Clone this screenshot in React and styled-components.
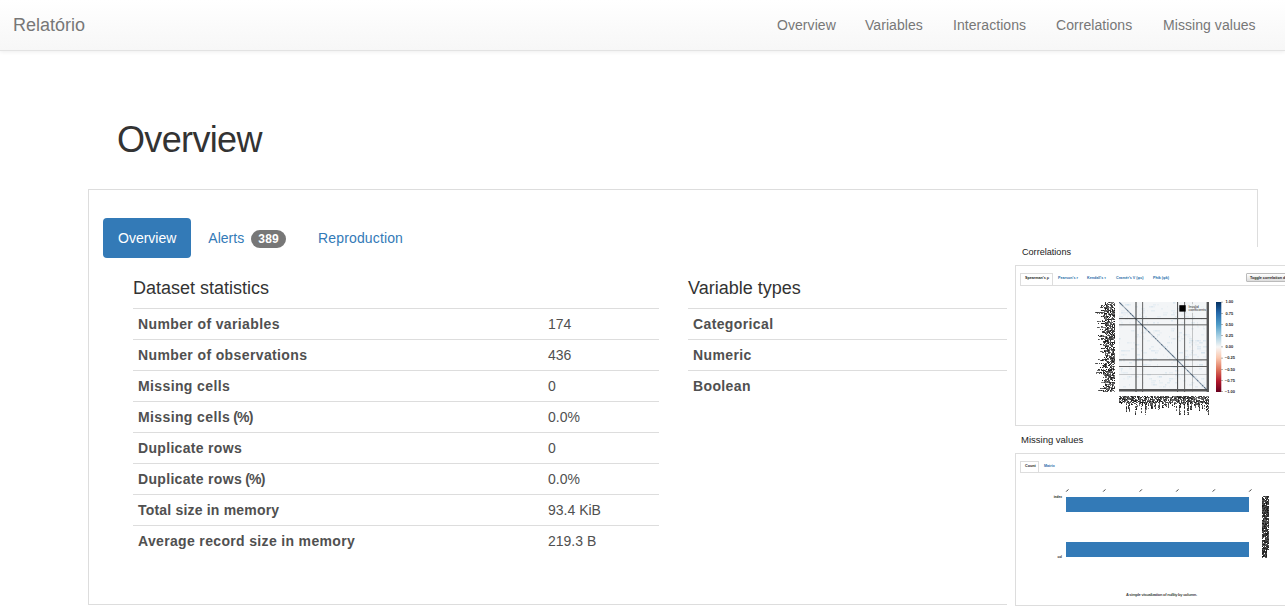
import React from 'react';
import styled, { createGlobalStyle } from 'styled-components';

const GlobalStyle = createGlobalStyle`
  * { box-sizing: border-box; }
  html, body { margin: 0; padding: 0; }
  body {
    background: #fff;
    color: #333;
    font: 14px/20px "Liberation Sans", Arial, sans-serif;
    overflow: hidden;
  }
`;

const Page = styled.div`
  position: relative;
  height: 611px;
  overflow: hidden;
`;

const Navbar = styled.nav`
  display: flex;
  justify-content: space-between;
  align-items: center;
  height: 51px;
  padding: 0 15px 0 13px;
  border-bottom: 1px solid #e3e3e3;
  background: linear-gradient(to bottom, #fff 0%, #f7f7f7 100%);
  box-shadow: 0 1px 4px rgba(0, 0, 0, 0.07);
  color: #777;
`;

const Brand = styled.span`
  font-size: 18px;
`;

const NavLinks = styled.div`
  display: grid;
  grid-template-columns: 88px 88px 103px 107px 122px;
`;

const NavLink = styled.a`
  padding-left: 15px;
  letter-spacing: 0.06px;
  white-space: nowrap;
`;

const PageTitle = styled.h1`
  margin: 68px 0 29px 117px;
  font-size: 36px;
  font-weight: 400;
  line-height: 41px;
  letter-spacing: -0.65px;
`;

const Panel = styled.section`
  width: 1170px;
  height: 416px;
  margin-left: 88px;
  padding: 28px 14px;
  border: 1px solid #ddd;
`;

const Tabs = styled.div`
  display: flex;
  gap: 2px;
`;

const Tab = styled.a`
  display: flex;
  align-items: center;
  height: 40px;
  padding: 0 15px;
  border-radius: 4px;
  background: ${(p) => (p.$active ? '#337ab7' : 'transparent')};
  color: ${(p) => (p.$active ? '#fff' : '#337ab7')};
  letter-spacing: ${(p) => p.$spacing || 0}px;
`;

const Badge = styled.span`
  margin: 2px 0 0 7px;
  padding: 3px 7px;
  border-radius: 10px;
  background: #777;
  color: #fff;
  font-size: 12px;
  font-weight: 700;
  line-height: 12px;
  letter-spacing: 0.3px;
`;

const Columns = styled.div`
  display: grid;
  grid-template-columns: 526px 526px;
  column-gap: 29px;
  padding: 20px 0 0 30px;
`;

const ColumnTitle = styled.h4`
  margin: 0 0 10px;
  font-size: 18px;
  font-weight: 400;
  line-height: 20px;
`;

const Row = styled.div`
  display: grid;
  grid-template-columns: 410px 1fr;
  padding: 5px;
  border-top: 1px solid #ddd;
  color: #505050;
`;

const RowLabel = styled.span`
  font-weight: 700;
  letter-spacing: ${(p) => p.$spacing ?? 0.38}px;
`;

const Unit = styled.span`
  letter-spacing: -0.8px;
`;

const Preview = styled.aside`
  position: absolute;
  left: 1007px;
  top: 247px;
  width: 278px;
  height: 364px;
  padding-left: 8px;
  background: #fff;
  overflow: hidden;
`;

const PreviewTitle = styled.h5`
  height: ${(p) => p.$height}px;
  margin: 0;
  padding: ${(p) => p.$top || 0}px 0 0 ${(p) => p.$indent}px;
  font-size: ${(p) => p.$size}px;
  font-weight: 400;
  line-height: 10px;
  color: #222;
`;

const Card = styled.div`
  width: 290px;
  height: ${(p) => p.$height}px;
  padding: 7px 0 0 4px;
  border: 1px solid #ddd;
`;

const MiniTabs = styled.div`
  display: flex;
  width: 265px;
  height: ${(p) => p.$height}px;
  border-bottom: 1px solid #ddd;
`;

const MiniTab = styled.a`
  height: ${(p) => (p.$active ? '100%' : '11px')};
  width: ${(p) => p.$width}px;
  padding-left: 4px;
  border: ${(p) => (p.$active ? '1px solid #ddd' : '1px solid transparent')};
  border-bottom: 0;
  background: #fff;
  color: ${(p) => (p.$active ? '#222' : '#276da8')};
  font-size: 3.7px;
  font-weight: 700;
  line-height: 8px;
  white-space: nowrap;
`;

const MiniButton = styled.button`
  width: 62px;
  height: 9px;
  margin-left: auto;
  margin-right: -23px;
  padding: 0 0 0 3px;
  border: 1px solid #bbb;
  border-radius: 1px;
  background: linear-gradient(#fff, #ddd);
  color: #222;
  font: 700 3.7px/6px "Liberation Sans", Arial, sans-serif;
  text-align: left;
  white-space: nowrap;
`;

const Drawing = styled.svg`
  display: block;
  margin-left: -4px;
  font-family: "Liberation Sans", Arial, sans-serif;
`;

const statistics = [
  { label: 'Number of variables', value: '174' },
  { label: 'Number of observations', value: '436' },
  { label: 'Missing cells', value: '0' },
  { label: 'Missing cells', unit: '(%)', value: '0.0%' },
  { label: 'Duplicate rows', value: '0', spacing: 0.32 },
  { label: 'Duplicate rows', unit: '(%)', value: '0.0%', spacing: 0.32 },
  { label: 'Total size in memory', value: '93.4 KiB', spacing: 0.19 },
  { label: 'Average record size in memory', value: '219.3 B', spacing: 0.34 },
];

const variableTypes = ['Categorical', 'Numeric', 'Boolean'];
const links = ['Overview', 'Variables', 'Interactions', 'Correlations', 'Missing values'];
const scale = ['1.00', '0.75', '0.50', '0.25', '0.00', '−0.25', '−0.50', '−0.75', '−1.00'];

function createRandom(seed) {
  let s = seed;
  return () => {
    s = (s * 16807) % 2147483647;
    return s / 2147483647;
  };
}

/* Crowded variable names along an axis, as short broken dashes. */
function axisMarks(seed, count, minLength, maxLength) {
  const rand = createRandom(seed);
  const marks = [];
  for (let i = 0; i < count; i += 1) {
    const reach = rand();
    const length = minLength + reach * reach * (maxLength - minLength);
    for (let d = 0; d < length; d += 1) {
      if (rand() > 0.24) marks.push({ i, d, o: 0.5 + rand() * 0.5 });
    }
  }
  return marks;
}

const leftMarks = axisMarks(731, 90, 9, 20);
const bottomMarks = axisMarks(977, 90, 6, 19);

const cellRandom = createRandom(4271);
const cells = Array.from({ length: 300 }, () => ({
  x: Math.floor(cellRandom() * 43) * 2,
  y: Math.floor(cellRandom() * 43) * 2,
  w: 1 + Math.floor(cellRandom() * 4),
  o: 0.06 + cellRandom() * 0.18,
}));
const diagonal = Array.from({ length: 88 }, (_, i) => ({ i, o: 0.35 + cellRandom() * 0.45 }));
const stripRandom = createRandom(611);
const strip = Array.from({ length: 62 * 7 }, (_, n) => ({
  x: n % 7,
  y: Math.floor(n / 7),
  v: stripRandom(),
})).filter((m) => m.v > 0.12 && !(m.x > 4 && m.y > 53));

function CorrelationChart() {
  return (
    <Drawing width="269" height="138" viewBox="1016 286 269 138">
      <defs>
        <linearGradient id="rdbu" x1="0" y1="0" x2="0" y2="1">
          <stop offset="0" stopColor="#053061" />
          <stop offset="0.12" stopColor="#2468aa" />
          <stop offset="0.25" stopColor="#4d9bc7" />
          <stop offset="0.38" stopColor="#a7d0e4" />
          <stop offset="0.5" stopColor="#f7f6f5" />
          <stop offset="0.62" stopColor="#fac8af" />
          <stop offset="0.75" stopColor="#dd735b" />
          <stop offset="0.88" stopColor="#b2182b" />
          <stop offset="1" stopColor="#67001f" />
        </linearGradient>
      </defs>
      {leftMarks.map((m, n) => (
        <rect key={n} x={1114 - m.d} y={302 + m.i} width="1" height="1" fill="#111" opacity={m.o} />
      ))}
      {bottomMarks.map((m, n) => (
        <rect key={n} x={1119 + m.i} y={396 + m.d} width="1" height="1" fill="#111" opacity={m.o} />
      ))}
      <rect x="1119" y="302" width="90" height="90" fill="#f3f5f7" />
      {cells.map((c, n) => (
        <rect key={n} x={1119 + c.x} y={302 + c.y} width={c.w} height="1.5" fill="#9fc4dc" opacity={c.o} />
      ))}
      {diagonal.map((d) => (
        <rect key={d.i} x={1119 + d.i} y={302 + d.i} width="1.3" height="1.3" fill="#2a4560" opacity={d.o} />
      ))}
      <g fill="#222" opacity="0.75">
        <rect x="1135.4" y="302" width="1.2" height="90" />
        <rect x="1142.2" y="302" width="0.9" height="90" />
        <rect x="1177" y="302" width="1.1" height="90" />
        <rect x="1184.2" y="302" width="0.9" height="90" />
        <rect x="1192.2" y="302" width="0.6" height="90" opacity="0.5" />
        <rect x="1206.6" y="302" width="2.4" height="90" />
        <rect x="1119" y="318" width="90" height="1.1" />
        <rect x="1119" y="324.4" width="90" height="0.9" />
        <rect x="1119" y="359.3" width="90" height="1.1" />
        <rect x="1119" y="366" width="90" height="0.9" />
        <rect x="1119" y="374.3" width="90" height="0.6" opacity="0.5" />
        <rect x="1119" y="389" width="90" height="2.5" />
      </g>
      <rect x="1187" y="304" width="19" height="9" fill="#f3f5f7" opacity="0.75" />
      <rect x="1179.3" y="305.2" width="6.4" height="6.4" fill="#000" />
      <text x="1188.5" y="307.8" fontSize="3.5" fill="#222">Invalid</text>
      <text x="1188.5" y="311.2" fontSize="3.5" fill="#222">coefficients</text>
      <rect x="1216" y="302" width="5.3" height="90" fill="url(#rdbu)" />
      {scale.map((label, i) => (
        <g key={label}>
          <rect x="1221.3" y={301.8 + i * 11.2} width="1.4" height="0.6" fill="#555" />
          <text
            x={i > 4 ? 1224.8 : 1225.5}
            y={303.4 + i * 11.2}
            fontSize="4"
            fontWeight="700"
            fill="#222"
          >
            {label}
          </text>
        </g>
      ))}
    </Drawing>
  );
}

function MissingChart() {
  return (
    <Drawing width="269" height="131" viewBox="1016 473 269 131">
      {[1067, 1104, 1140.5, 1177, 1213.5, 1250].map((x) => (
        <path key={x} d={`M${x - 0.8} 491.6 L${x + 1.4} 489.4`} stroke="#222" strokeWidth="0.9" />
      ))}
      <text x="1062" y="498.2" fontSize="3.2" fontWeight="700" textAnchor="end" fill="#222">index</text>
      <text x="1062" y="558.2" fontSize="3.2" fontWeight="700" textAnchor="end" fill="#222">col</text>
      <rect x="1066" y="497" width="183" height="15" fill="#337ab7" />
      <rect x="1066" y="542" width="183" height="15" fill="#337ab7" />
      {strip.map((m, n) => (
        <rect
          key={n}
          x={1262 + m.x}
          y={496 + m.y}
          width="1"
          height="1"
          fill="#111"
          opacity={0.6 + m.v * 0.4}
        />
      ))}
      <text x="1126" y="596.2" fontSize="4" fontWeight="700" textLength="71" fill="#444">
        A simple visualization of nullity by column.
      </text>
    </Drawing>
  );
}

export default function App() {
  return (
    <Page>
      <GlobalStyle />
      <Navbar>
        <Brand>Relatório</Brand>
        <NavLinks>
          {links.map((link) => (
            <NavLink key={link}>{link}</NavLink>
          ))}
        </NavLinks>
      </Navbar>
      <PageTitle>Overview</PageTitle>
      <Panel>
        <Tabs>
          <Tab $active>Overview</Tab>
          <Tab>
            Alerts <Badge>389</Badge>
          </Tab>
          <Tab $spacing={0.14}>Reproduction</Tab>
        </Tabs>
        <Columns>
          <div>
            <ColumnTitle>Dataset statistics</ColumnTitle>
            {statistics.map(({ label, unit, value, spacing }) => (
              <Row key={label + (unit || '')}>
                <RowLabel $spacing={spacing}>
                  {label}
                  {unit && <Unit> {unit}</Unit>}
                </RowLabel>
                <span>{value}</span>
              </Row>
            ))}
          </div>
          <div>
            <ColumnTitle>Variable types</ColumnTitle>
            {variableTypes.map((label) => (
              <Row key={label}>
                <RowLabel>{label}</RowLabel>
              </Row>
            ))}
          </div>
        </Columns>
      </Panel>
      <Preview>
        <PreviewTitle $indent={7} $height={18} $size={9.1}>Correlations</PreviewTitle>
        <Card $height={161}>
          <MiniTabs $height={13}>
            <MiniTab $active $width={33}>Spearman's ρ</MiniTab>
            <MiniTab $width={29}>Pearson's r</MiniTab>
            <MiniTab $width={29}>Kendall's τ</MiniTab>
            <MiniTab $width={37}>Cramér's V (φc)</MiniTab>
            <MiniTab $width={30}>Phik (φk)</MiniTab>
            <MiniButton>Toggle correlation descriptions</MiniButton>
          </MiniTabs>
          <CorrelationChart />
        </Card>
        <PreviewTitle $indent={6} $height={27} $size={9.5} $top={9}>Missing values</PreviewTitle>
        <Card $height={153}>
          <MiniTabs $height={12}>
            <MiniTab $active $width={19}>Count</MiniTab>
            <MiniTab $width={24}>Matrix</MiniTab>
          </MiniTabs>
          <MissingChart />
        </Card>
      </Preview>
    </Page>
  );
}
